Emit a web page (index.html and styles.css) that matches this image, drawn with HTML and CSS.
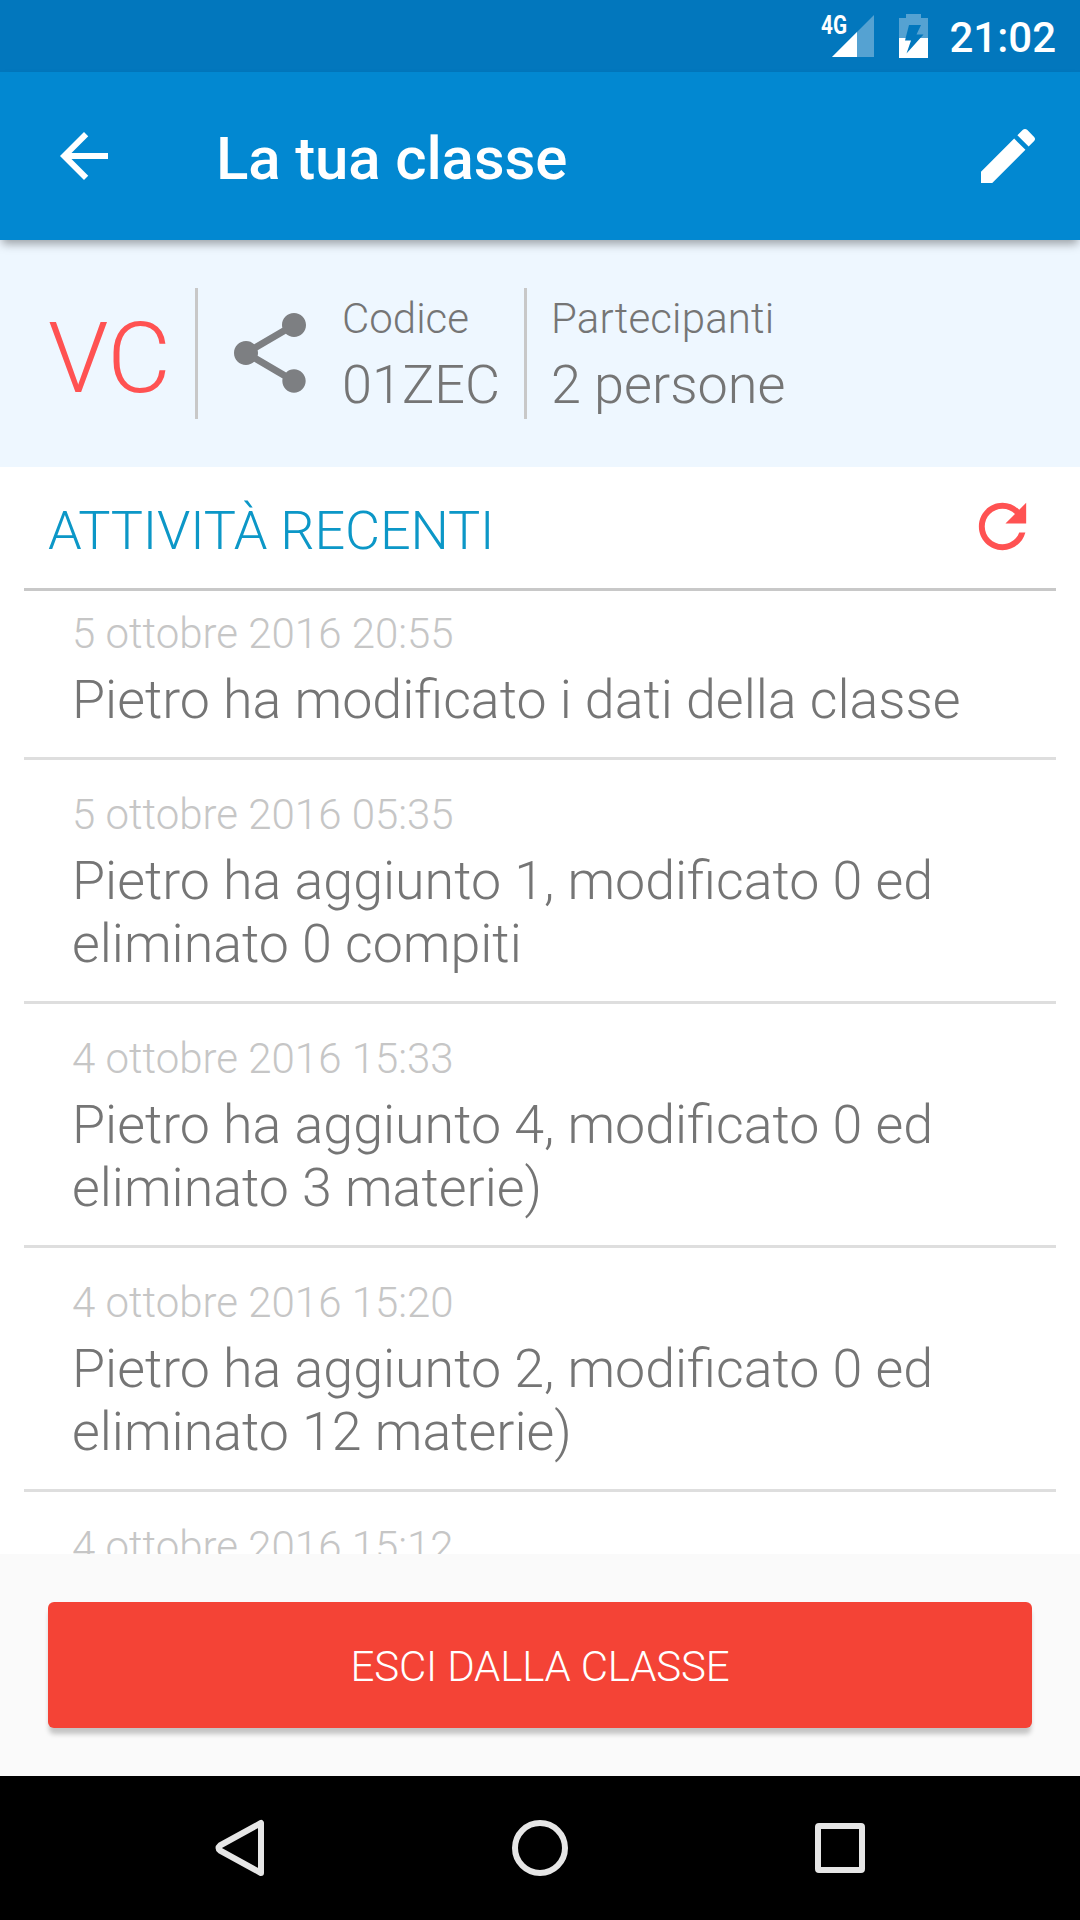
FILE: index.html
```html
<!DOCTYPE html>
<html lang="it">

<head>
  <meta charset="UTF-8">
  <meta name="viewport" content="width=device-width, initial-scale=1.0">
  <title>La tua classe</title>
  <link rel="stylesheet" href="styles.css">
</head>

<body>
  <div class="status-bar">
    <svg class="signal" width="54" height="44" viewBox="0 0 54 44">
      <path d="M53 1V43H11z" fill="#55a2d2" />
      <path d="M36 18V43H11z" fill="#fff" />
      <text class="rete" x="0" y="20" textLength="26" lengthAdjust="spacingAndGlyphs">4G</text>
    </svg>
    <svg class="battery" width="29" height="44" viewBox="0 0 29 44">
      <path d="M7 0H22V4H29V24H0V4H7z" fill="#55a2d2" />
      <path d="M0 24H29V44H0z" fill="#fff" />
      <path d="M10 11H22L17.500 20.500H24.500L7.500 39.500L12 26.500H6z" fill="#0277bd" />
    </svg>
    <span class="ora">21:02</span>
  </div>

  <header class="toolbar">
    <svg class="icon" viewBox="0 0 24 24"><path d="M20 11H7.830l5.590-5.590L12 4l-8 8 8 8 1.410-1.410L7.830 13H20v-2z" /></svg>
    <h1>La tua classe</h1>
    <svg class="icon" viewBox="0 0 24 24"><path d="M3 17.250V21h3.750L17.810 9.940l-3.750-3.750L3 17.250zM20.710 7.040c.39-.39.39-1.020 0-1.410l-2.340-2.340c-.39-.39-1.020-.39-1.410 0l-1.830 1.830 3.750 3.750 1.830-1.830z" /></svg>
  </header>

  <section class="info">
    <div class="sigla">VC</div>
    <div class="codice">
      <svg class="share" viewBox="0 0 24 24"><path d="M18 16.080c-.76 0-1.440.3-1.960.77L8.910 12.700c.05-.23.09-.46.09-.7s-.04-.47-.09-.7l7.050-4.110c.54.5 1.250.81 2.040.81 1.660 0 3-1.340 3-3s-1.340-3-3-3-3 1.340-3 3c0 .24.04.47.09.7L8.040 9.810C7.500 9.310 6.790 9 6 9c-1.660 0-3 1.340-3 3s1.340 3 3 3c.79 0 1.500-.31 2.040-.81l7.120 4.160c-.05.21-.08.43-.08.65 0 1.610 1.310 2.920 2.920 2.920 1.610 0 2.920-1.310 2.920-2.920s-1.310-2.920-2.920-2.920z" /></svg>
      <div>
        <div class="label">Codice</div>
        <div class="valore">01ZEC</div>
      </div>
    </div>
    <div class="partecipanti">
      <div class="label">Partecipanti</div>
      <div class="valore">2 persone</div>
    </div>
  </section>

  <main class="attivita">
    <div class="titolo">
      <h2>ATTIVITÀ RECENTI</h2>
      <svg class="icon refresh" viewBox="0 0 24 24"><path d="M17.650 6.350C16.200 4.900 14.210 4 12 4c-4.420 0-7.990 3.580-7.990 8s3.570 8 7.990 8c3.730 0 6.840-2.550 7.730-6h-2.080c-.82 2.330-3.040 4-5.650 4-3.310 0-6-2.690-6-6s2.690-6 6-6c1.660 0 3.140.69 4.220 1.780L13 11h7V4l-2.350 2.350z" /></svg>
    </div>
    <ul class="lista">
      <li>
        <div class="data">5 ottobre 2016 20:55</div>
        <div class="testo">Pietro ha modificato i dati della classe</div>
      </li>
      <li>
        <div class="data">5 ottobre 2016 05:35</div>
        <div class="testo">Pietro ha aggiunto 1, modificato 0 ed eliminato 0 compiti</div>
      </li>
      <li>
        <div class="data">4 ottobre 2016 15:33</div>
        <div class="testo">Pietro ha aggiunto 4, modificato 0 ed eliminato 3 materie)</div>
      </li>
      <li>
        <div class="data">4 ottobre 2016 15:20</div>
        <div class="testo">Pietro ha aggiunto 2, modificato 0 ed eliminato 12 materie)</div>
      </li>
      <li>
        <div class="data">4 ottobre 2016 15:12</div>
      </li>
    </ul>
  </main>

  <footer class="azioni">
    <button>ESCI DALLA CLASSE</button>
  </footer>

  <nav class="nav-bar">
    <svg viewBox="0 0 60 60"><path d="M51 5V55L10 32.500Q7 30 10 27.500z" /></svg>
    <svg viewBox="0 0 60 60"><circle cx="30" cy="30" r="25" /></svg>
    <svg viewBox="0 0 60 60"><rect x="8" y="8" width="44" height="44" rx="1" /></svg>
  </nav>
</body>

</html>
```
FILE: styles.css
```css
* {
  box-sizing: border-box;
}

body {
  margin: 0;
  width: 1080px;
  height: 1920px;
  display: flex;
  flex-direction: column;
  overflow: hidden;
  background: #fafafa;
  font-family: Roboto, sans-serif;
  font-weight: 300;
  color: #757575;
}

svg {
  display: block;
  flex-shrink: 0;
}

h1,
h2 {
  margin: 0;
}

.icon {
  width: 72px;
  height: 72px;
  fill: currentColor;
}

/* barra di stato */
.status-bar {
  height: 72px;
  flex-shrink: 0;
  display: flex;
  justify-content: flex-end;
  padding: 14px 24px 0 0;
  background: #0277bd;
  color: #fff;
}

.signal {
  overflow: visible;
}

.rete {
  font-size: 26px;
  font-weight: 700;
  fill: #fff;
}

.battery {
  margin-left: 24px;
}

.ora {
  margin-left: 21px;
  font-size: 42px;
  line-height: 48px;
  font-weight: 500;
}

.toolbar {
  position: relative;
  height: 168px;
  flex-shrink: 0;
  display: flex;
  align-items: center;
  padding: 0 36px 0 48px;
  background: #0288d1;
  color: #fff;
  box-shadow: 0 6px 9px -2px rgba(0, 0, 0, 0.35);
}

.toolbar h1 {
  flex: 1;
  margin-left: 96px;
  padding-top: 6px;
  font-size: 60px;
  line-height: 70px;
  font-weight: 500;
  letter-spacing: -0.15px;
}

/* dati della classe */
.info {
  height: 227px;
  flex-shrink: 0;
  display: flex;
  padding: 48px;
  background: #eef7ff;
}

.sigla {
  width: 150px;
  padding-top: 1px;
  border-right: 3px solid #c8c8c8;
  color: #ff5252;
  font-size: 98px;
  line-height: 139px;
  letter-spacing: -0.5px;
}

.codice {
  display: flex;
  width: 329px;
  border-right: 3px solid #c8c8c8;
}

.share {
  width: 96px;
  height: 96px;
  margin: 17px 24px 0;
  fill: #7d7f82;
}

.partecipanti {
  padding-left: 24px;
}

.label {
  padding-top: 6px;
  font-size: 42px;
  line-height: 49px;
}

.partecipanti .label {
  letter-spacing: 0.15px;
}

.valore {
  padding-top: 10px;
  font-size: 54px;
  line-height: 63px;
}

/* elenco attività */
.attivita {
  height: 1087px;
  flex-shrink: 0;
  overflow: hidden;
  padding: 0 24px;
  background: #fff;
}

.titolo {
  height: 124px;
  display: flex;
  justify-content: space-between;
  padding: 24px 18px 0 24px;
  border-bottom: 3px solid #c8c8c8;
  color: #ff5252;
}

.titolo h2 {
  padding-top: 8px;
  color: #0c97c7;
  font-size: 54px;
  line-height: 63px;
  font-weight: 300;
  letter-spacing: -0.15px;
}

.refresh {
  width: 71px;
  height: 71px;
}

.lista {
  list-style: none;
  margin: 0;
  padding: 0;
}

.lista li {
  padding: 30px 48px 26px;
  border-bottom: 3px solid #dedede;
}

/* la prima riga è in parte scorsa sotto il titolo */
.lista li:first-child {
  padding-top: 18px;
}

.data {
  color: #c6c6c6;
  font-size: 42px;
  line-height: 49px;
}

.testo {
  margin-top: 10px;
  font-size: 53.75px;
  line-height: 63px;
}

.azioni {
  height: 222px;
  flex-shrink: 0;
  padding: 48px;
}

button {
  display: block;
  width: 100%;
  height: 126px;
  padding: 3px 0 0;
  border: none;
  border-radius: 6px;
  background: #f44336;
  box-shadow: 0 7px 5px -1px rgba(0, 0, 0, 0.22);
  color: #fff;
  font-family: inherit;
  font-size: 42px;
  font-weight: 300;
  letter-spacing: -0.15px;
}

.nav-bar {
  height: 144px;
  flex-shrink: 0;
  display: flex;
  justify-content: center;
  gap: 240px;
  padding-top: 42px;
  background: #000;
}

.nav-bar svg {
  width: 60px;
  height: 60px;
  fill: none;
  stroke: #e6e6e6;
  stroke-width: 6;
  stroke-linejoin: round;
}
```
